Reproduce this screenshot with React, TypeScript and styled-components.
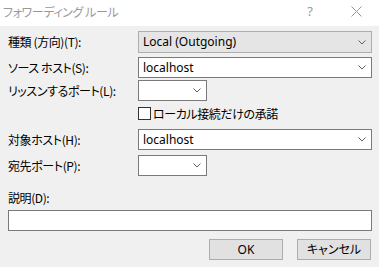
import React from 'react';
import styled, { createGlobalStyle } from 'styled-components';

const GlobalStyle = createGlobalStyle`
  html, body {
    margin: 0;
    padding: 0;
    background: #f0f0f0;
  }
  body {
    font-family: "Noto Sans", "Noto Sans CJK JP", sans-serif;
    font-size: 12px;
    color: #000;
  }
`;

const Window = styled.div`
  width: 379px;
  height: 267px;
  background: #f0f0f0;
  display: flex;
  flex-direction: column;
  overflow: hidden;
`;

const TitleBar = styled.div`
  height: 26px;
  background: #fff;
  display: flex;
  align-items: center;
  padding-left: 3px;
  box-sizing: border-box;
`;

const Title = styled.div`
  flex: 1;
  color: #999;
  font-family: "Noto Sans CJK JP", sans-serif;
  font-feature-settings: "palt";
  letter-spacing: -0.4px;
  font-size: 12px;
  margin-top: -4px;
`;

const TitleButton = styled.div<{ $width: number }>`
  width: ${p => p.$width}px;
  height: 26px;
  display: flex;
  align-items: center;
  justify-content: center;
  color: #999;
  font-size: 13px;
  margin-top: -4px;
`;

const Body = styled.div`
  padding: 5px 7px 0 8px;
  display: flex;
  flex-direction: column;
`;

const FieldRow = styled.div<{ $top: number; $height?: number }>`
  display: grid;
  grid-template-columns: 130px 1fr;
  align-items: center;
  height: ${p => p.$height ?? 21}px;
  margin-top: ${p => p.$top}px;
`;

const Label = styled.label`
  display: block;
  height: 16px;
  font-family: "Noto Sans CJK JP", sans-serif;
  font-feature-settings: "palt";
  letter-spacing: -0.4px;
  font-size: 12px;
  line-height: 16px;
  white-space: nowrap;
`;

const Combo = styled.div<{ $width?: number; $disabled?: boolean }>`
  box-sizing: border-box;
  width: ${p => (p.$width ? `${p.$width}px` : '100%')};
  height: 100%;
  border: 1px solid ${p => (p.$disabled ? '#adadad' : '#7a7a7a')};
  background: ${p => (p.$disabled ? '#e5e5e5' : '#fff')};
  display: flex;
  align-items: center;
  padding: 0 5px 0 4px;
`;

const ComboText = styled.span`
  flex: 1;
  height: 16px;
  font-size: 12px;
  line-height: 16px;
  white-space: nowrap;
`;

const Chevron = () => (
  <svg width="8" height="5" viewBox="0 0 8 5">
    <path d="M0.5 0.5 L4 4 L7.5 0.5" fill="none" stroke="#606060" strokeWidth="1" />
  </svg>
);

const CheckRow = styled.div`
  display: flex;
  align-items: center;
  height: 13px;
  margin-top: 6px;
  margin-left: 130px;
  gap: 2px;
`;

const CheckBox = styled.div`
  box-sizing: border-box;
  width: 13px;
  height: 13px;
  border: 1px solid #333;
  background: #fff;
`;

const DescLabel = styled(Label)`
  margin-top: 14px;
`;

const TextInput = styled.div`
  box-sizing: border-box;
  margin-top: 4px;
  height: 21px;
  border: 1px solid #7a7a7a;
  background: #fff;
`;

const ButtonBar = styled.div`
  display: flex;
  justify-content: flex-end;
  gap: 14px;
  margin-top: 8px;
  padding-right: 1px;
`;

const Button = styled.button`
  box-sizing: border-box;
  width: 74px;
  height: 21px;
  border: 1px solid #adadad;
  background: #e1e1e1;
  font-family: "Noto Sans", "Noto Sans CJK JP", sans-serif;
  font-feature-settings: "palt";
  font-size: 12px;
  color: #000;
  padding: 0;
  line-height: 16px;
`;

const App: React.FC = () => {
  return (
    <Window>
      <GlobalStyle />
      <TitleBar>
        <Title>フォワーディング ルール</Title>
        <TitleButton $width={46}>?</TitleButton>
        <TitleButton $width={46}>
          <svg width="11" height="11" viewBox="0 0 11 11">
            <path d="M0.5 0.5 L10.5 10.5 M10.5 0.5 L0.5 10.5" stroke="#999" strokeWidth="1" />
          </svg>
        </TitleButton>
      </TitleBar>
      <Body>
        <FieldRow $top={0} $height={22}>
          <Label>種類 (方向)(T):</Label>
          <Combo $disabled>
            <ComboText>Local (Outgoing)</ComboText>
            <Chevron />
          </Combo>
        </FieldRow>
        <FieldRow $top={4}>
          <Label>ソース ホスト(S):</Label>
          <Combo>
            <ComboText>localhost</ComboText>
            <Chevron />
          </Combo>
        </FieldRow>
        <FieldRow $top={2}>
          <Label>リッスンするポート(L):</Label>
          <Combo $width={69}>
            <ComboText />
            <Chevron />
          </Combo>
        </FieldRow>
        <CheckRow>
          <CheckBox />
          <Label>ローカル接続だけの承諾</Label>
        </CheckRow>
        <FieldRow $top={9}>
          <Label>対象ホスト(H):</Label>
          <Combo>
            <ComboText>localhost</ComboText>
            <Chevron />
          </Combo>
        </FieldRow>
        <FieldRow $top={5}>
          <Label>宛先ポート(P):</Label>
          <Combo $width={69}>
            <ComboText />
            <Chevron />
          </Combo>
        </FieldRow>
        <DescLabel>説明(D):</DescLabel>
        <TextInput />
        <ButtonBar>
          <Button>OK</Button>
          <Button>キャンセル</Button>
        </ButtonBar>
      </Body>
    </Window>
  );
};

export default App;
